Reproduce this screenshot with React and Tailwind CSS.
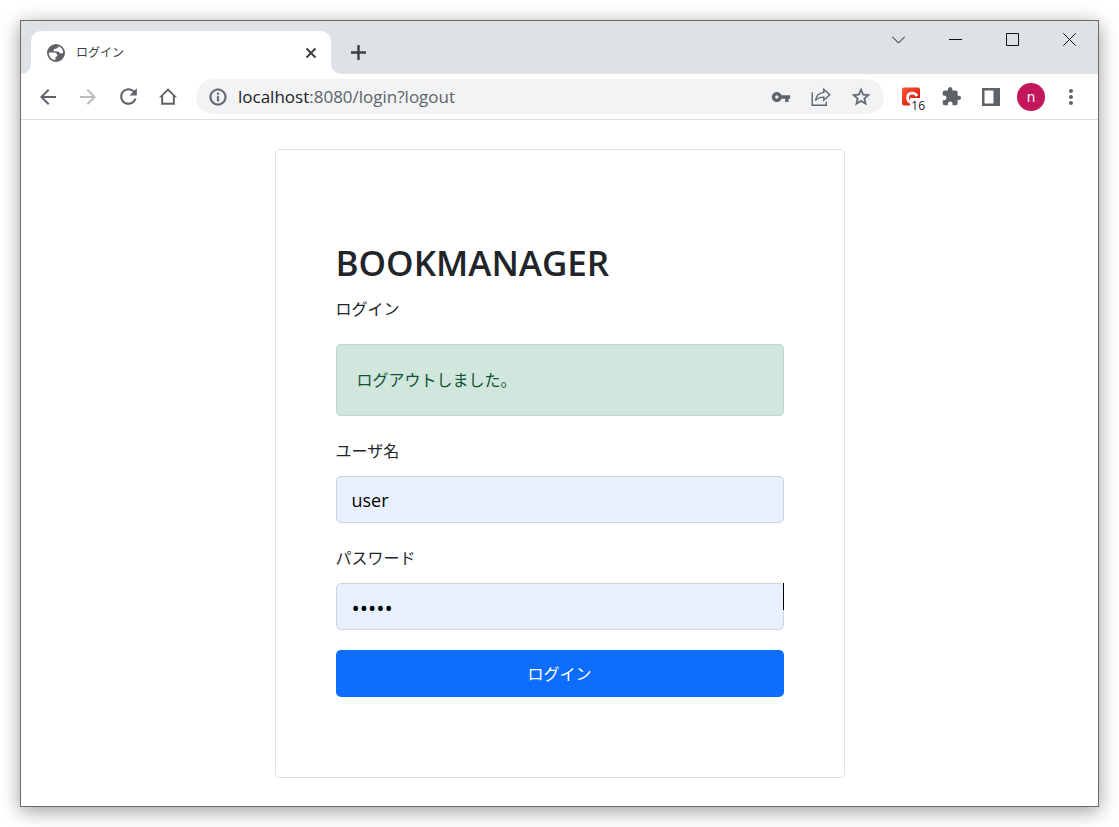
import React from "react";

function Icon({ children, className = "size-5" }) {
  return (
    <svg viewBox="0 0 24 24" fill="currentColor" aria-hidden="true" className={`block shrink-0 ${className}`}>
      {children}
    </svg>
  );
}

function IconButton({ label, className = "text-[#5f6368]", children }) {
  return (
    <button type="button" aria-label={label} className={`flex size-10 shrink-0 items-center justify-center ${className}`}>
      {children}
    </button>
  );
}

function WindowButton({ label, children }) {
  return (
    <button type="button" aria-label={label} className="flex h-[37px] w-[57px] items-center justify-center">
      <svg viewBox="0 0 13 13" fill="none" stroke="#111" className="block size-[13px]" aria-hidden="true">
        {children}
      </svg>
    </button>
  );
}

function TitleBar() {
  return (
    <div className="flex h-[53px] items-end justify-between bg-[#dee1e6]">
      <div className="flex items-end">
        <div className="h-[43px] w-[10px] bg-white">
          <div className="h-full rounded-br-[10px] bg-[#dee1e6]" />
        </div>
        <div className="flex h-[43px] w-[300px] items-center gap-[10px] rounded-t-[10px] bg-white pl-[15px] pr-[14px]">
          <svg viewBox="0 0 20 20" className="block size-5 shrink-0" aria-hidden="true">
            <circle cx="10" cy="10" r="9" fill="#5f6368" />
            <path
              d="M2.8 9.6H7.4C9.6 9.6 11.4 10.8 11.4 12.4C11.4 13.6 9.4 13.4 9.4 14.6V17.1A7.1 7.1 0 0 1 2.8 9.6Z M12.6 3.3A7.1 7.1 0 0 1 17.1 9.8C16.4 10.8 14.8 10.9 13.8 10C12.8 9.1 12.6 8.6 11 8.6H9.2C7.8 8.6 7.2 7.6 7.8 6.6C8.6 5.4 12.2 6 12.6 3.3Z"
              fill="#fff"
            />
          </svg>
          <span className="flex-1 text-[12px] leading-5 text-[#3c4043]">ログイン</span>
          <button type="button" aria-label="タブを閉じる" className="flex size-3 items-center justify-center">
            <svg viewBox="0 0 12 12" className="block size-3" stroke="#3c4043" strokeWidth="2" aria-hidden="true">
              <path d="M1.5 1.5l9 9M10.5 1.5l-9 9" />
            </svg>
          </button>
        </div>
        <div className="h-[43px] bg-white">
          <div className="flex h-full items-center rounded-bl-[10px] bg-[#dee1e6] pl-5">
            <button type="button" aria-label="新しいタブ" className="flex size-4 items-center justify-center">
              <svg viewBox="0 0 16 16" className="block size-4" stroke="#3c4043" strokeWidth="2.4" aria-hidden="true">
                <path d="M7.5 0v15M0 7.5h15" />
              </svg>
            </button>
          </div>
        </div>
      </div>
      <div className="flex self-start">
        <WindowButton label="タブを検索">
          <path d="M0 3.5L6.5 10 13 3.5" />
        </WindowButton>
        <WindowButton label="最小化">
          <path d="M0 6.5h13" />
        </WindowButton>
        <WindowButton label="最大化">
          <path d="M.5.5h12v12h-12z" />
        </WindowButton>
        <WindowButton label="閉じる">
          <path d="M.3.3l12.4 12.4M12.7.3L.3 12.7" />
        </WindowButton>
      </div>
    </div>
  );
}

function Toolbar() {
  return (
    <div className="flex h-[46px] items-center border-b border-[#dadce0] bg-white px-[7px]">
      <IconButton label="戻る">
        <Icon className="size-6"><path d="M20 11H7.83l5.59-5.59L12 4l-8 8 8 8 1.41-1.41L7.83 13H20v-2z" /></Icon>
      </IconButton>
      <IconButton label="進む" className="text-[#babcbe]">
        <Icon className="size-6"><path d="M12 4l-1.41 1.41L16.17 11H4v2h12.17l-5.58 5.59L12 20l8-8z" /></Icon>
      </IconButton>
      <IconButton label="再読み込み">
        <Icon className="size-[25px]"><path d="M17.65 6.35C16.2 4.9 14.21 4 12 4c-4.42 0-7.99 3.58-7.99 8s3.57 8 7.99 8c3.73 0 6.84-2.55 7.73-6h-2.08c-.82 2.33-3.04 4-5.65 4-3.31 0-6-2.69-6-6s2.69-6 6-6c1.66 0 3.14.69 4.22 1.78L13 11h7V4l-2.35 2.35z" /></Icon>
      </IconButton>
      <IconButton label="ホーム">
        <Icon className="size-5"><path d="M12 4.9l5.8 5.4V19H6.2v-8.7L12 4.9M12 1.6L1.2 12.2H3.8v9.2h16.4v-9.2h2.6L12 1.6z" /></Icon>
      </IconButton>
      <div className="ml-2 flex h-[35px] min-w-0 flex-1 items-center rounded-full bg-[#f1f3f4] pl-3 pr-[3px]">
        <Icon className="size-5 text-[#5f6368]"><path d="M11 17h2v-6h-2v6zm1-15C6.48 2 2 6.48 2 12s4.48 10 10 10 10-4.48 10-10S17.52 2 12 2zm0 18c-4.41 0-8-3.59-8-8s3.59-8 8-8 8 3.59 8 8-3.59 8-8 8zM11 9h2V7h-2v2z" stroke="currentColor" strokeWidth=".5" /></Icon>
        <div className="ml-[10px] min-w-0 flex-1 truncate text-[17px] leading-6 text-[#5f6368]">
          <span className="text-[#202124]">localhost</span>:8080/login?logout
        </div>
        <IconButton label="パスワードを管理">
          <Icon className="size-5"><path d="M12.65 10C11.83 7.67 9.61 6 7 6c-3.31 0-6 2.69-6 6s2.69 6 6 6c2.61 0 4.83-1.67 5.65-4H17v4h4v-4h2v-4H12.65zM7 14c-1.1 0-2-.9-2-2s.9-2 2-2 2 .9 2 2-.9 2-2 2z" /></Icon>
        </IconButton>
        <IconButton label="共有">
          <svg viewBox="0 0 20 20" fill="none" stroke="currentColor" strokeWidth="1.4" className="block size-5" aria-hidden="true">
            <path d="M1.2 5.2v13.1h14.1v-3.2" />
            <path d="M12.8 2.2l6 5.6-6 5.4v-3.1c-3.8 0-6.4.9-8.2 3.5.5-4.6 3.4-7.6 8.2-8.2z" />
          </svg>
        </IconButton>
        <IconButton label="ブックマーク">
          <Icon className="size-[22px]"><path d="M22 9.24l-7.19-.62L12 2 9.19 8.63 2 9.24l5.46 4.73L5.82 21 12 17.27 18.18 21l-1.63-7.03L22 9.24zM12 15.4l-3.76 2.27 1-4.28-3.32-2.88 4.38-.38L12 6.1l1.71 4.04 4.38.38-3.32 2.88 1 4.28L12 15.4z" stroke="currentColor" strokeWidth=".3" /></Icon>
        </IconButton>
      </div>
      <div className="ml-[7px] flex items-center">
        <button type="button" aria-label="拡張機能 16" className="relative flex size-10 items-center justify-center">
          <svg viewBox="0 0 20 20" className="block size-5" aria-hidden="true">
            <defs>
              <linearGradient id="ext" x1="0" y1="0" x2="1" y2="1">
                <stop offset="0" stopColor="#ff5a36" />
                <stop offset="1" stopColor="#cf0a00" />
              </linearGradient>
            </defs>
            <path d="M3 .5h14a2 2 0 0 1 2 2v8.5H9v7.5H3a2 2 0 0 1-2-2V2.500a2 2 0 0 1 2-2z" fill="url(#ext)" />
            <path d="M16.200 9C13.500 4.800 7 5.200 6.600 10.200c-.2 2.400 .8 4.200 2.400 5.400" fill="none" stroke="#fff" strokeWidth="2.6" />
          </svg>
          <span className="absolute right-[6px] bottom-[5px] text-[12px] leading-3 text-[#202124]">16</span>
        </button>
        <IconButton label="拡張機能">
          <Icon className="size-[21px]"><path d="M20.5 11H19V7c0-1.1-.9-2-2-2h-4V3.5C13 2.12 11.88 1 10.5 1S8 2.12 8 3.5V5H4c-1.1 0-1.99.9-1.99 2v3.8H3.5c1.49 0 2.7 1.21 2.7 2.7s-1.21 2.7-2.7 2.7H2V20c0 1.1.9 2 2 2h3.8v-1.5c0-1.49 1.21-2.7 2.7-2.7 1.49 0 2.7 1.21 2.7 2.7V22H17c1.1 0 2-.9 2-2v-4h1.5c1.38 0 2.5-1.12 2.5-2.5S21.88 11 20.5 11z" /></Icon>
        </IconButton>
        <IconButton label="サイドパネル">
          <svg viewBox="0 0 18 18" className="block size-[18px]" fill="currentColor" aria-hidden="true">
            <path fillRule="evenodd" d="M0 0h18v18H0zM2.5 2.5v13h9v-13z" />
          </svg>
        </IconButton>
        <button type="button" aria-label="プロフィール" className="flex size-10 items-center justify-center">
          <span className="flex size-7 items-center justify-center rounded-full bg-[#c2185b] text-[14px] leading-5 text-white">n</span>
        </button>
        <IconButton label="メニュー">
          <Icon className="size-6"><path d="M12 8c1.1 0 2-.9 2-2s-.9-2-2-2-2 .9-2 2 .9 2 2 2zm0 2c-1.1 0-2 .9-2 2s.9 2 2 2 2-.9 2-2-.9-2-2-2zm0 6c-1.1 0-2 .9-2 2s.9 2 2 2 2-.9 2-2-.9-2-2-2z" /></Icon>
        </IconButton>
      </div>
    </div>
  );
}

const fieldClass =
  "block h-[47px] w-full rounded-[5px] border border-[#ced4da] bg-[#e8f0fe] px-[15px] text-black outline-none";

function LoginForm() {
  return (
    <form
      className="w-full max-w-[570px] rounded-[5px] border border-[#dfdfdf] px-[60px] pt-[90px] pb-20 text-[#212529]"
      onSubmit={(e) => e.preventDefault()}
    >
      <h1 className="text-[35px] leading-[46px] font-semibold">BOOKMANAGER</h1>
      <p className="mt-2 text-[16px] leading-[30px]">ログイン</p>
      <div role="alert" className="mt-5 rounded-[5px] border border-[#badbcc] bg-[#d1e7dd] p-5 text-[16px] leading-[30px] text-[#0f5132]">
        ログアウトしました。
      </div>
      <label htmlFor="username" className="mt-5 mb-[10px] block text-[16px] leading-[30px]">ユーザ名</label>
      <input id="username" type="text" defaultValue="user" className={`${fieldClass} text-[18px]`} />
      <label htmlFor="password" className="mt-5 mb-[10px] block text-[16px] leading-[30px]">パスワード</label>
      <div className="relative">
        <input id="password" type="password" defaultValue="admin" className={`${fieldClass} text-[22px]`} />
        <span className="absolute top-0 right-0 h-[27px] w-px bg-black" />
      </div>
      <button type="submit" className="mt-5 block h-[47px] w-full rounded-[5px] bg-[#0d6efd] text-[16px] leading-[30px] text-white">
        ログイン
      </button>
    </form>
  );
}

export default function App() {
  return (
    <div className="flex min-h-screen bg-white p-5 font-['Open_Sans','Noto_Sans_CJK_JP',sans-serif]">
      <div className="flex min-w-0 flex-1 flex-col border border-[#6b6b6b] bg-white shadow-[0_4px_18px_rgba(0,0,0,0.4)]">
        <TitleBar />
        <Toolbar />
        <main className="flex flex-1 items-start justify-center px-5 pt-[29px] pb-7">
          <LoginForm />
        </main>
      </div>
    </div>
  );
}
